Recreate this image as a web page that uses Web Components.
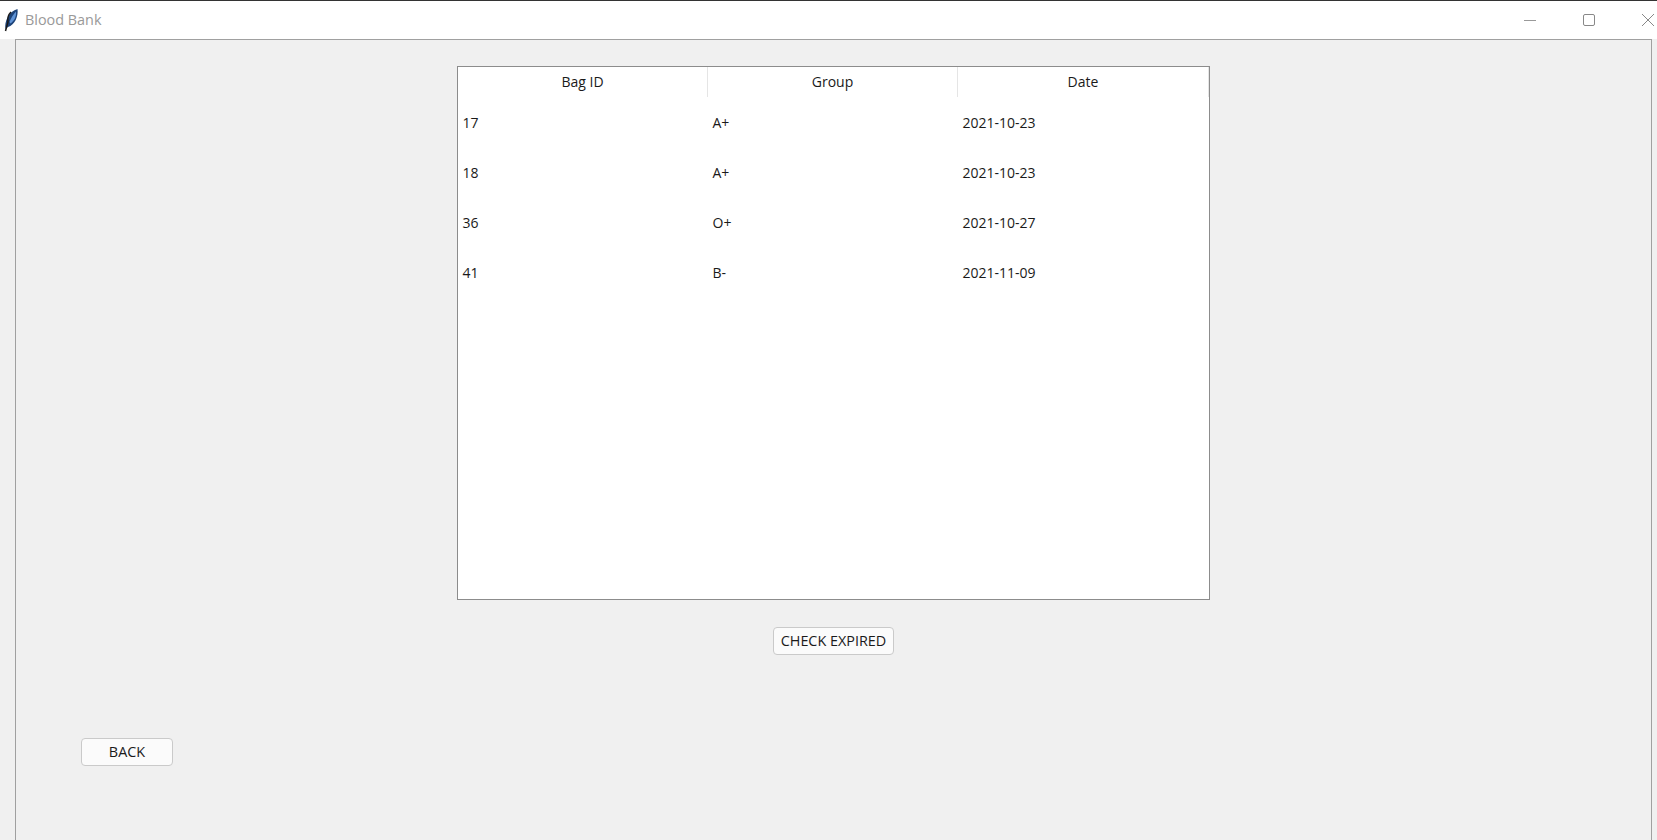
<!DOCTYPE html>
<html>
<head>
<meta charset="utf-8">
<title>Blood Bank</title>
<style>
  html, body { margin: 0; padding: 0; height: 100%; overflow: hidden; background: #f0f0f0; }
</style>
</head>
<body>
<bb-window title-text="Blood Bank">
  <bb-table></bb-table>
  <bb-button class="check" style="margin-top:27px;width:121px">CHECK EXPIRED</bb-button>
  <bb-button slot="footer" style="width:92px">BACK</bb-button>
</bb-window>

<script>
class BbWindow extends HTMLElement {
  constructor() {
    super();
    this.attachShadow({ mode: 'open' });
  }

  connectedCallback() {
    const title = this.getAttribute('title-text') || '';
    this.shadowRoot.innerHTML = `
      <style>
        :host {
          display: flex;
          flex-direction: column;
          height: 840px;
          font-family: "Open Sans", "Noto Sans", sans-serif;
          color: #1a1a1a;
          border-top: 1px solid #333;
          box-sizing: border-box;
        }
        .titlebar {
          height: 38px;
          background: #fff;
          display: flex;
          align-items: center;
          flex: none;
        }
        .logo { margin-left: 3px; width: 16px; height: 24px; flex: none; }
        .title {
          margin-left: 6px;
          padding-bottom: 2px;
          font-size: 14.4px;
          color: #999;
          flex: 1;
        }
        .controls { display: flex; align-items: center; flex: none; }
        .controls svg { display: block; }
        .body-row { flex: 1; display: flex; min-height: 0; }
        .client {
          flex: 1;
          margin: 0 5px 0 15px;
          border-left: 1px solid #a0a0a0;
          border-top: 1px solid #a0a0a0;
          border-right: 1px solid #a0a0a0;
          background: #f0f0f0;
          display: flex;
          flex-direction: column;
          min-height: 0;
        }
        .main {
          display: flex;
          flex-direction: column;
          align-items: center;
          padding-top: 26px;
        }
        .footer { padding: 83px 0 0 65px; }
      </style>
      <div class="titlebar">
        <svg class="logo" viewBox="0 0 16 24">
          <path d="M2.5 21 C1 14 6 3 14.5 1 C15.5 8 12 17 5 19 Z" fill="#1d4379"/>
          <path d="M6.5 14 C8 10 10 7 13 3.5 C13.5 9 11 13 7.5 15.5 Z" fill="#5f93d6"/>
          <path d="M2.5 23 L5 14 C4 9 6 6 8 4" stroke="#1a1a1a" stroke-width="1.5" fill="none"/>
        </svg>
        <span class="title">${title}</span>
        <div class="controls">
          <svg width="12" height="12" viewBox="0 0 12 12" style="margin-right:47px"><path d="M0 6.5H12" stroke="#999" stroke-width="1"/></svg>
          <svg width="12" height="12" viewBox="0 0 12 12" style="margin-right:47px"><rect x="0.5" y="0.5" width="11" height="11" rx="1.5" fill="none" stroke="#888" stroke-width="1"/></svg>
          <svg width="12" height="12" viewBox="0 0 12 12" style="margin-right:3px"><path d="M0 0L12 12M12 0L0 12" stroke="#888" stroke-width="1"/></svg>
        </div>
      </div>
      <div class="body-row">
        <div class="client">
          <div class="main"><slot></slot></div>
          <div class="footer"><slot name="footer"></slot></div>
        </div>
      </div>
    `;
  }
}
customElements.define('bb-window', BbWindow);

class BbTable extends HTMLElement {
  constructor() {
    super();
    this.attachShadow({ mode: 'open' });
    this.rows = [
      ['17', 'A+', '2021-10-23'],
      ['18', 'A+', '2021-10-23'],
      ['36', 'O+', '2021-10-27'],
      ['41', 'B-', '2021-11-09']
    ];
  }

  connectedCallback() {
    const cells = this.rows.map(r => `<div class="row">${r.map(c => `<span>${c}</span>`).join('')}</div>`).join('');
    this.shadowRoot.innerHTML = `
      <style>
        :host {
          display: block;
          width: 753px;
          height: 534px;
          box-sizing: border-box;
          background: #fff;
          border: 1px solid #8c8c8c;
          font-size: 14px;
          color: #1a1a1a;
        }
        .head, .row { display: grid; grid-template-columns: 250px 250px 1fr; }
        .head { height: 30px; }
        .head span {
          text-align: center;
          line-height: 30px;
          border-right: 1px solid #e5e5e5;
        }
        .row { height: 50px; align-items: center; }
        .row span { padding-left: 4.5px; }
      </style>
      <div class="head"><span>Bag ID</span><span>Group</span><span>Date</span></div>
      ${cells}
    `;
  }
}
customElements.define('bb-table', BbTable);

class BbButton extends HTMLElement {
  constructor() {
    super();
    this.attachShadow({ mode: 'open' });
  }

  connectedCallback() {
    this.shadowRoot.innerHTML = `
      <style>
        :host {
          display: block;
          height: 28px;
          box-sizing: border-box;
          background: #fbfbfb;
          border: 1px solid #cacaca;
          border-radius: 4px;
          font-size: 14.4px;
          color: #1a1a1a;
          text-align: center;
          line-height: 26px;
        }
      </style>
      <slot></slot>
    `;
  }
}
customElements.define('bb-button', BbButton);
</script>
</body>
</html>
